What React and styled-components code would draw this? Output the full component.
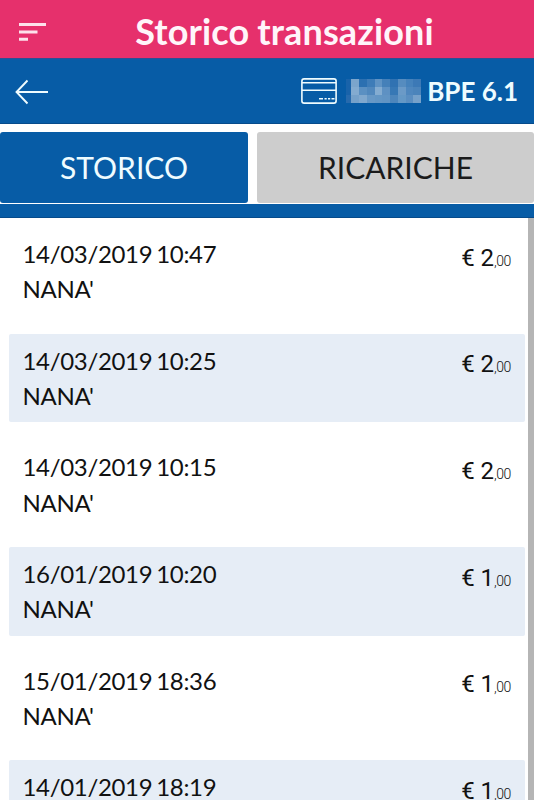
import React from "react";
import styled, { createGlobalStyle } from "styled-components";

const BLUE = "#075ca6";

const GlobalStyle = createGlobalStyle`
  * { box-sizing: border-box; }
  html, body { margin: 0; background: #fff; overflow: hidden; }
  body { font-family: Lato, "Liberation Sans", sans-serif; color: #111; }
`;

const Screen = styled.main`
  width: 534px;
  height: 800px;
  display: flex;
  flex-direction: column;
  overflow: hidden;
  background: #fff;
`;

const TitleBar = styled.header`
  flex: 0 0 58px;
  display: grid;
  grid-template-columns: 64px 1fr 30px;
  align-items: center;
  background: #e6306c;
  color: #fff5fa;
`;

const IconButton = styled.button`
  display: flex;
  padding: ${(p) => p.$drop}px 0 0 ${(p) => p.$inset}px;
  border: 0;
  background: none;
  color: inherit;
`;

const Title = styled.h1`
  margin: 0;
  padding: 3px 0 0 1px;
  text-align: center;
  font-size: 36px;
  line-height: 42px;
  font-weight: 700;
  letter-spacing: 0.13px;
  word-spacing: -1px;
  white-space: nowrap;
`;

const AccountBar = styled.div`
  flex: 0 0 66px;
  display: flex;
  align-items: center;
  justify-content: space-between;
  padding-right: 16px;
  background: ${BLUE};
  border-top: 1px solid #2d4d93;
  border-bottom: 1px solid #064b8b;
  color: #effcff;
`;

const Account = styled.div`
  display: flex;
  align-items: center;
`;

const AccountName = styled.span`
  margin: -1px 0 0 6px;
  font-size: 26px;
  line-height: 32px;
  font-weight: 700;
  white-space: nowrap;
`;

const Mosaic = styled.div`
  display: grid;
  grid-template-columns: 5px repeat(9, 1fr);
  grid-template-rows: repeat(3, 8px);
  width: 75px;
  margin-left: 9px;
`;

const MosaicCell = styled.span`
  background: ${(p) => p.$color};
`;

const Tabs = styled.nav`
  flex: 0 0 80px;
  display: grid;
  grid-template-columns: 248px 1fr;
  column-gap: 9px;
  padding: 8px 0 1px;
  background: #fff;
`;

const Tab = styled.button`
  border: 0;
  border-radius: 3px;
  padding: 0 0 2px;
  font: 400 30px/36px Lato, sans-serif;
  background: ${(p) => (p.$active ? BLUE : "#cdcdcd")};
  color: ${(p) => (p.$active ? "#effcff" : "#1b1b1b")};
`;

const Divider = styled.div`
  flex: 0 0 14px;
  background: ${BLUE};
  border-bottom: 1px solid #064b8b;
`;

const ScrollArea = styled.section`
  flex: 1;
  min-height: 0;
  display: grid;
  grid-template-columns: 1fr 6px;
`;

const ScrollBar = styled.div`
  background: #b5b5b5;
`;

const List = styled.ul`
  margin: 0;
  padding: 9px 3px 0 9px;
  min-height: 0;
  overflow: hidden;
  list-style: none;
`;

const Row = styled.li`
  display: flex;
  justify-content: space-between;
  height: 88.7px;
  margin-bottom: 18px;
  padding: 9px 14px 0 13.5px;
  border-radius: 2px;
  background: ${(p) => (p.$shaded ? "#e6edf6" : "transparent")};
`;

const Details = styled.div`
  font-size: 24px;
  line-height: 35.4px;
  letter-spacing: -0.33px;
  word-spacing: -1.8px;
  white-space: nowrap;
`;

const Amount = styled.div`
  padding-top: 4.5px;
  font: 400 24px/35.6px Roboto, sans-serif;
  letter-spacing: -0.1px;
  white-space: nowrap;
`;

const Cents = styled.span`
  font-size: 14px;
  font-weight: 300;
  letter-spacing: -0.4px;
`;

const mosaic = [
  ["#1963aa", "#7ba5cc", "#2c70b1", "#3e7cb8", "#6093c4", "#4580b9", "#3072b2", "#568cbf", "#4682bb", "#3c79b6"],
  ["#1963aa", "#83abd0", "#5b90c2", "#5188bd", "#84acd1", "#5e91c3", "#3778b5", "#6b9ac7", "#4f87be", "#4b84bb"],
  ["#276aad", "#75a1ca", "#80a8ce", "#6798c6", "#6396c5", "#6194c4", "#4d86bc", "#6498c6", "#5a8ec1", "#76a1ca"],
];

const transactions = [
  ["14/03/2019 10:47", 2],
  ["14/03/2019 10:25", 2],
  ["14/03/2019 10:15", 2],
  ["16/01/2019 10:20", 1],
  ["15/01/2019 18:36", 1],
  ["14/01/2019 18:19", 1],
];

const MenuIcon = () => (
  <svg width="28" height="20" viewBox="0 0 28 20" fill="none" stroke="currentColor" strokeOpacity="0.9" strokeWidth="3">
    <path d="M0 2.5h27M0 10h18.5M0 17.3h9" />
  </svg>
);

const BackIcon = () => (
  <svg width="34" height="26" viewBox="0 0 34 26" fill="none" stroke="currentColor" strokeWidth="1.9">
    <path d="M33 13H1.5M12.5 1.5L1.5 13l11 11.5" />
  </svg>
);

const CardIcon = () => (
  <svg width="36" height="26" viewBox="0 0 36 26" fill="none" stroke="currentColor" strokeWidth="1.6">
    <rect x="0.9" y="0.9" width="34.2" height="24.2" rx="2.2" />
    <path d="M1 4.7h34M1 12.3h34M18 20.8h4M23.5 20.8h2.2M27 20.8h2.2M30.5 20.8h3" />
  </svg>
);

export default function App() {
  return (
    <Screen>
      <GlobalStyle />
      <TitleBar>
        <IconButton $inset={19} $drop={5} aria-label="Menu"><MenuIcon /></IconButton>
        <Title>Storico transazioni</Title>
      </TitleBar>
      <AccountBar>
        <IconButton $inset={15} $drop={2} aria-label="Indietro"><BackIcon /></IconButton>
        <Account>
          <CardIcon />
          <Mosaic>
            {mosaic.flat().map((color, i) => <MosaicCell key={i} $color={color} />)}
          </Mosaic>
          <AccountName>BPE 6.1</AccountName>
        </Account>
      </AccountBar>
      <Tabs>
        <Tab $active>STORICO</Tab>
        <Tab>RICARICHE</Tab>
      </Tabs>
      <Divider />
      <ScrollArea>
        <List>
          {transactions.map(([date, euros], i) => (
            <Row key={date} $shaded={i % 2 === 1}>
              <Details>
                <div>{date}</div>
                <div>NANA'</div>
              </Details>
              <Amount>€ {euros}<Cents>,00</Cents></Amount>
            </Row>
          ))}
        </List>
        <ScrollBar />
      </ScrollArea>
    </Screen>
  );
}
